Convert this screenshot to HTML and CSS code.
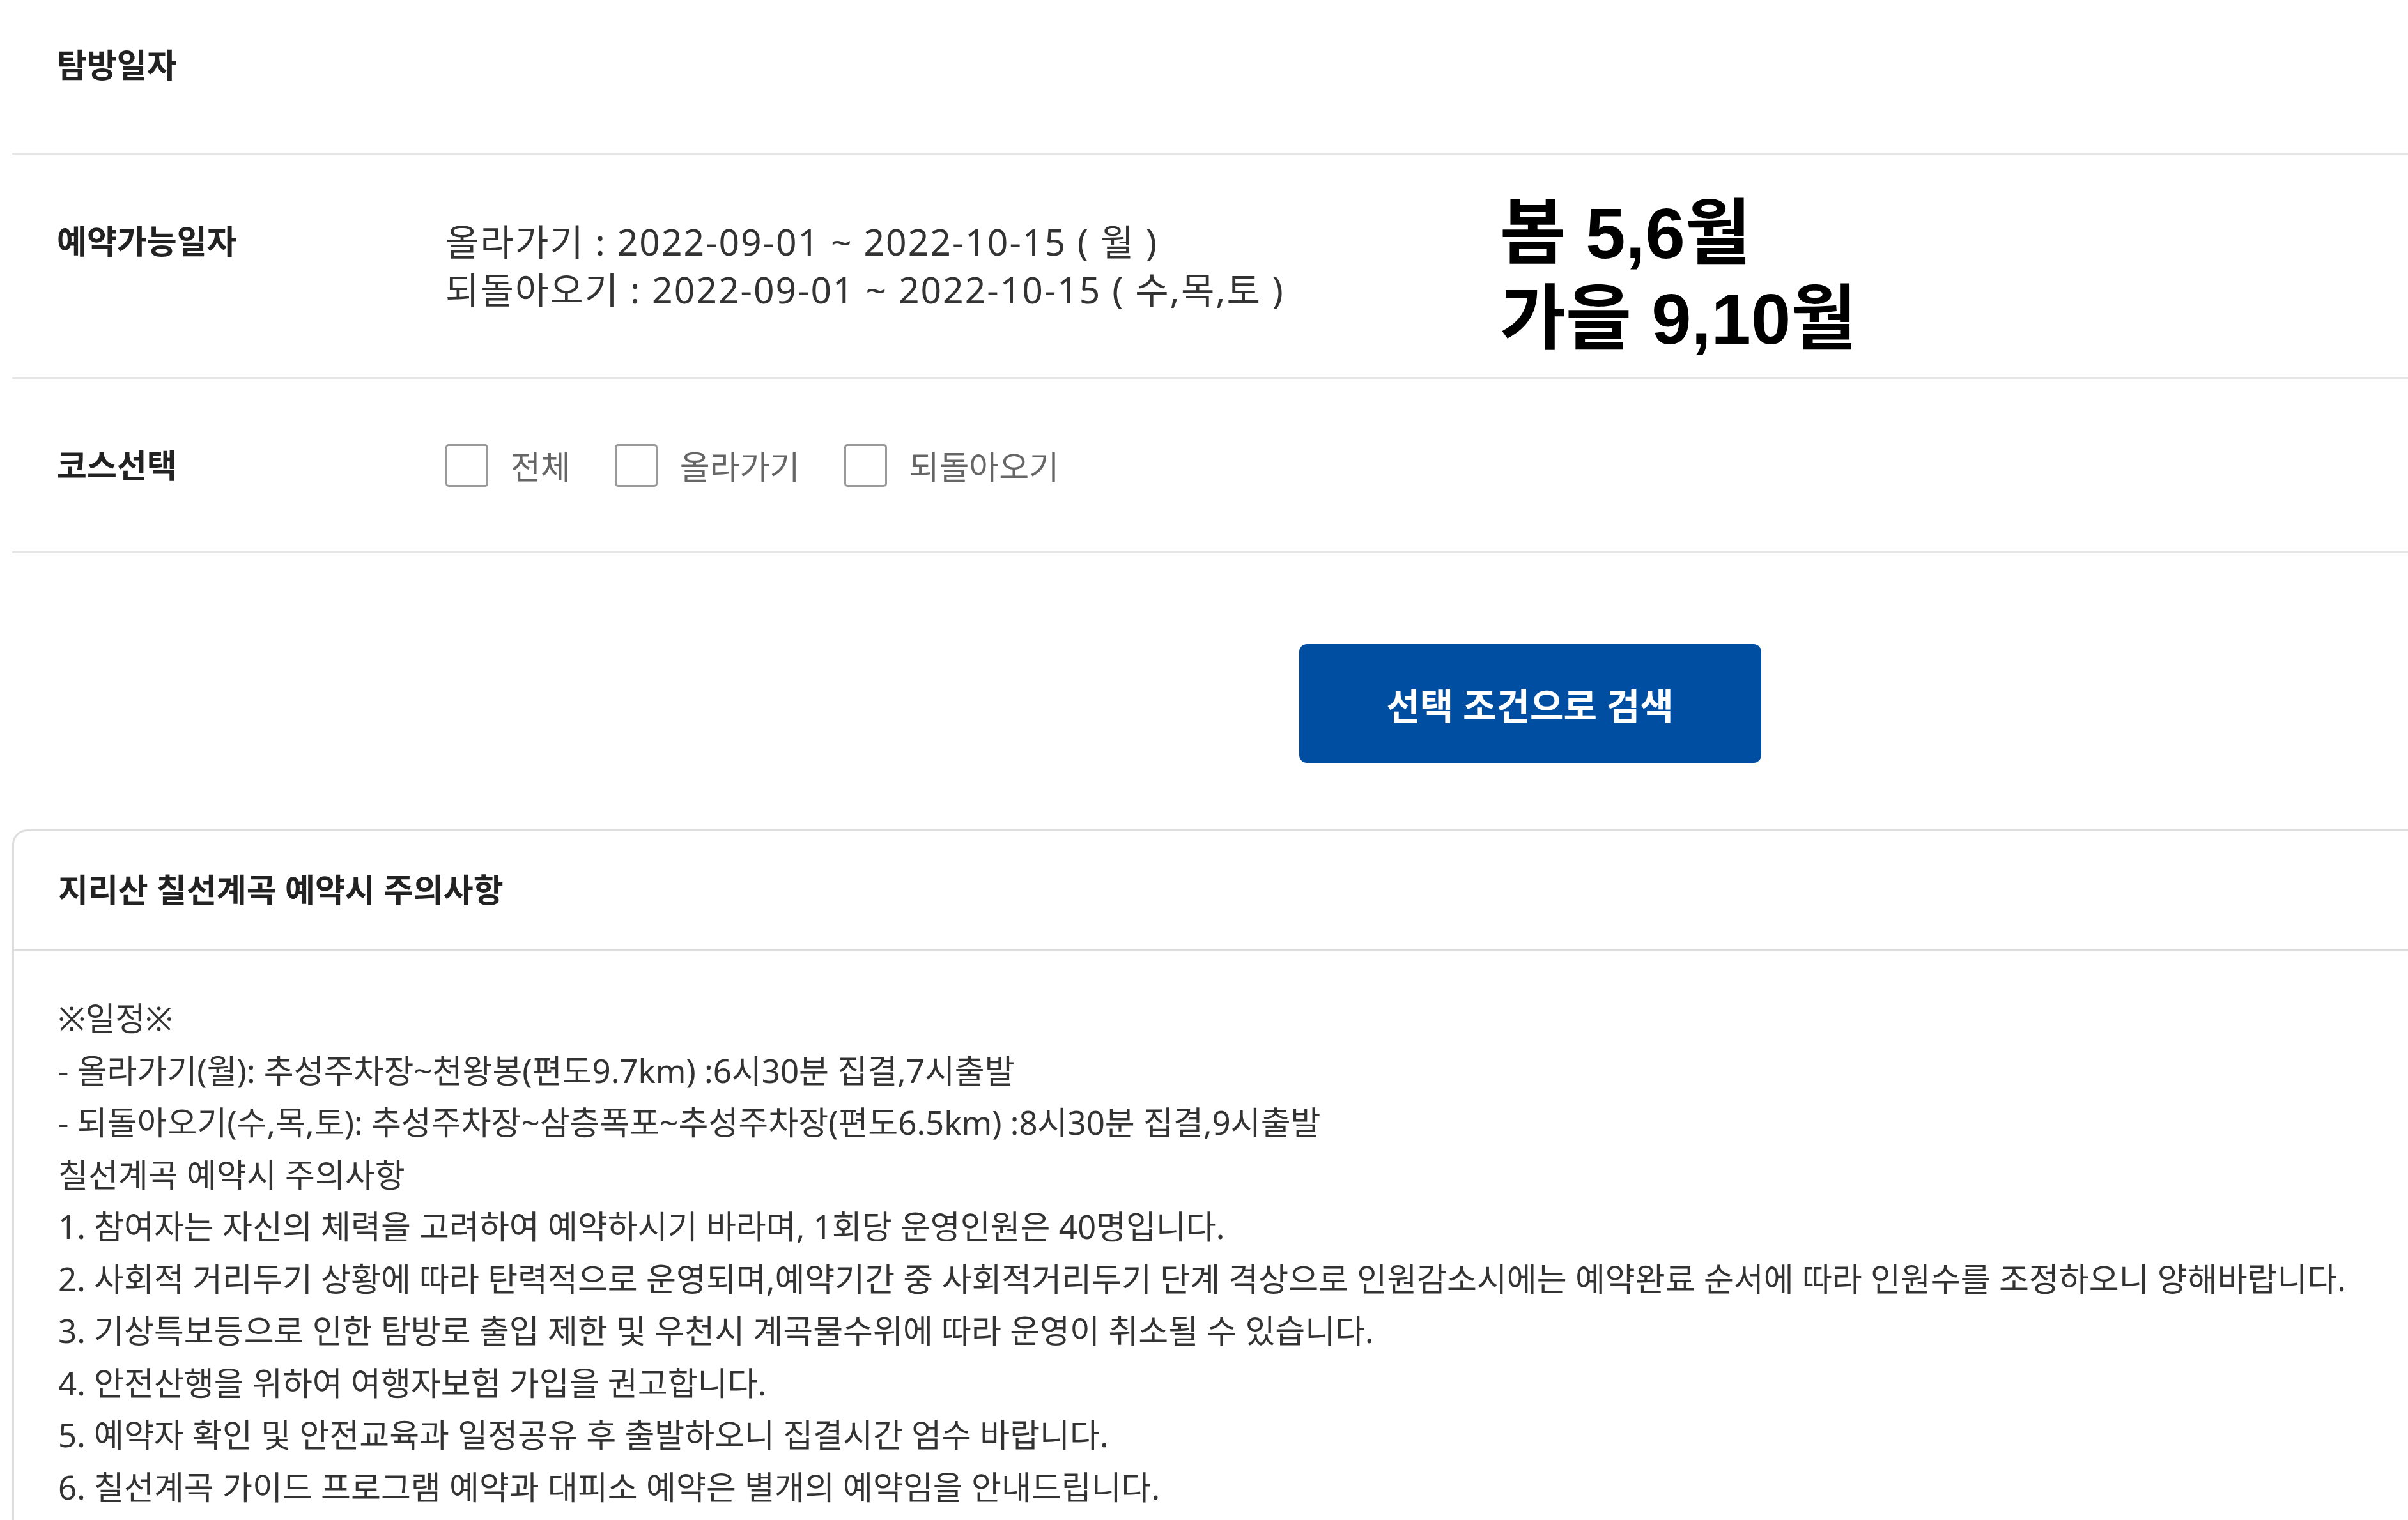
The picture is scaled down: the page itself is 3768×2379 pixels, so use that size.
FILE: index.html
```html
<!DOCTYPE html>
<html lang="ko">
<head>
    <meta charset="UTF-8">
    <meta name="viewport" content="width=device-width, initial-scale=1.0">
    <title>칠선계곡 탐방예약</title>
    <link rel="stylesheet" href="styles.css">
</head>
<body>
    <div class="container">
        <div class="form-table">
            <div class="form-row first">
                <div class="form-label">탐방일자</div>
                <div class="form-value"></div>
            </div>
            <div class="form-row">
                <div class="form-label">예약가능일자</div>
                <div class="form-value dates">
                    <p>올라가기 : 2022-09-01 ~ 2022-10-15 ( 월 )</p>
                    <p>되돌아오기 : 2022-09-01 ~ 2022-10-15 ( 수,목,토 )</p>
                </div>
                <div class="season-note">봄 5,6월<br>가을 9,10월</div>
            </div>
            <div class="form-row">
                <div class="form-label">코스선택</div>
                <div class="form-value checks">
                    <label class="check"><input type="checkbox" name="course" value="all"><span>전체</span></label>
                    <label class="check"><input type="checkbox" name="course" value="up"><span>올라가기</span></label>
                    <label class="check"><input type="checkbox" name="course" value="back"><span>되돌아오기</span></label>
                </div>
            </div>
        </div>

        <div class="search-area">
            <button type="button" class="search-btn">선택 조건으로 검색</button>
        </div>

        <div class="notice">
            <div class="notice-head">지리산 칠선계곡 예약시 주의사항</div>
            <div class="notice-body">
                <p>※일정※</p>
                <p>- 올라가기(월): 추성주차장~천왕봉(편도9.7km) :6시30분 집결,7시출발</p>
                <p>- 되돌아오기(수,목,토): 추성주차장~삼층폭포~추성주차장(편도6.5km) :8시30분 집결,9시출발</p>
                <p>칠선계곡 예약시 주의사항</p>
                <p>1. 참여자는 자신의 체력을 고려하여 예약하시기 바라며, 1회당 운영인원은 40명입니다.</p>
                <p>2. 사회적 거리두기 상황에 따라 탄력적으로 운영되며,예약기간 중 사회적거리두기 단계 격상으로 인원감소시에는 예약완료 순서에 따라 인원수를 조정하오니 양해바랍니다.</p>
                <p>3. 기상특보등으로 인한 탐방로 출입 제한 및 우천시 계곡물수위에 따라 운영이 취소될 수 있습니다.</p>
                <p>4. 안전산행을 위하여 여행자보험 가입을 권고합니다.</p>
                <p>5. 예약자 확인 및 안전교육과 일정공유 후 출발하오니 집결시간 엄수 바랍니다.</p>
                <p>6. 칠선계곡 가이드 프로그램 예약과 대피소 예약은 별개의 예약임을 안내드립니다.</p>
            </div>
        </div>
    </div>
</body>
</html>
```

FILE: styles.css
```css
:root {
    --line-color: #e6e6e6;
    --box-border: #dddddd;
    --text-color: #333333;
    --label-color: #222222;
    --primary-color: #004ea2;
}

* {
    margin: 0;
    padding: 0;
    box-sizing: border-box;
}

html, body {
    overflow: hidden;
}

body {
    font-family: "Noto Sans", "Noto Sans CJK KR", sans-serif;
    color: var(--text-color);
    background: #ffffff;
}

.container {
    width: 4769px;
    padding-left: 19px;
}

/* form rows */
.form-row {
    display: flex;
    align-items: flex-start;
    padding: 99px 0 99px 70px;
    border-bottom: 3px solid var(--line-color);
}

.form-row.first {
    padding-top: 65px;
    padding-bottom: 102px;
}

.form-label {
    width: 608px;
    flex-shrink: 0;
    font-size: 51px;
    line-height: 72px;
    font-weight: 700;
    color: var(--label-color);
}

.dates {
    width: 1650px;
    flex-shrink: 0;
    font-size: 57px;
    line-height: 75px;
    letter-spacing: 2px;
}

/* note pasted over the row, kept out of the row height */
.season-note {
    margin: -42px 0 -80px;
    font-family: "Liberation Sans", "Noto Sans CJK KR", sans-serif;
    font-size: 112px;
    line-height: 134px;
    font-weight: 700;
    color: #000000;
}

.checks {
    display: flex;
    align-items: center;
    gap: 69px;
    height: 72px;
}

.check {
    display: flex;
    align-items: center;
    gap: 35px;
    font-size: 51px;
    color: #666666;
    cursor: pointer;
}

.check input {
    appearance: none;
    width: 67px;
    height: 67px;
    border: 3px solid #9a9a9a;
    border-radius: 5px;
    background: #ffffff;
}

/* search button */
.search-area {
    display: flex;
    justify-content: center;
    padding: 142px 0 104px;
}

.search-btn {
    width: 723px;
    height: 186px;
    border: none;
    border-radius: 12px;
    background: var(--primary-color);
    color: #ffffff;
    font-family: inherit;
    font-size: 57px;
    font-weight: 700;
    cursor: pointer;
}

/* notice box */
.notice {
    border: 3px solid var(--box-border);
    border-radius: 24px;
}

.notice-head {
    padding: 55px 69px 58px;
    font-size: 51px;
    line-height: 72px;
    font-weight: 700;
    color: var(--label-color);
    border-bottom: 3px solid var(--box-border);
}

.notice-body {
    padding: 64px 69px;
    font-size: 51px;
    line-height: 81.5px;
}
```
